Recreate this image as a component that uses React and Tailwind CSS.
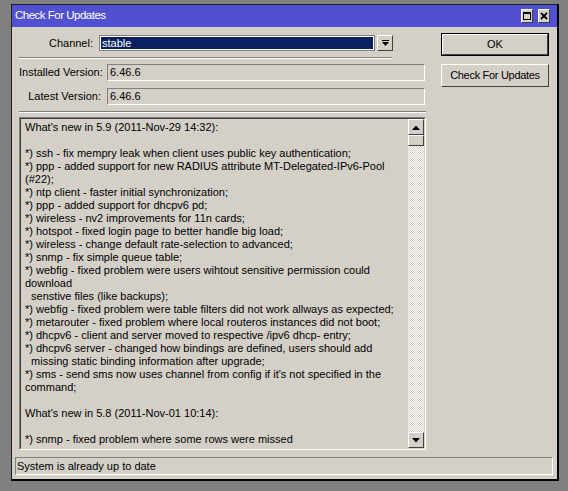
import React from "react";

const lines = [
  "What's new in 5.9 (2011-Nov-29 14:32):",
  "",
  "*) ssh - fix mempry leak when client uses public key authentication;",
  "*) ppp - added support for new RADIUS attribute MT-Delegated-IPv6-Pool",
  "(#22);",
  "*) ntp client - faster initial synchronization;",
  "*) ppp - added support for dhcpv6 pd;",
  "*) wireless - nv2 improvements for 11n cards;",
  "*) hotspot - fixed login page to better handle big load;",
  "*) wireless - change default rate-selection to advanced;",
  "*) snmp - fix simple queue table;",
  "*) webfig - fixed problem were users wihtout sensitive permission could",
  "download",
  "  senstive files (like backups);",
  "*) webfig - fixed problem were table filters did not work allways as expected;",
  "*) metarouter - fixed problem where local routeros instances did not boot;",
  "*) dhcpv6 - client and server moved to respective /ipv6 dhcp- entry;",
  "*) dhcpv6 server - changed how bindings are defined, users should add",
  "  missing static binding information after upgrade;",
  "*) sms - send sms now uses channel from config if it's not specified in the",
  "command;",
  "",
  "What's new in 5.8 (2011-Nov-01 10:14):",
  "",
  "*) snmp - fixed problem where some rows were missed",
];

const Raised = ({ className = "", children }) => (
  <div className={"border border-t-white border-l-white border-b-[#404040] border-r-[#404040] bg-[#d4d0c8] " + className}>
    {children}
  </div>
);

const Field = ({ label, value }) => (
  <div className="flex items-center h-[17px]">
    <div className="w-[88px] text-right pr-[6px] whitespace-nowrap">{label}</div>
    <div className="w-[318px] h-[17px] border border-t-[#808080] border-l-[#808080] border-b-white border-r-white flex items-center pl-[2px]">
      {value}
    </div>
  </div>
);

export default function App() {
  return (
    <div
      className="w-[568px] h-[491px] bg-[#808080] pt-[4px] pl-[11px] text-[11px] text-black"
      style={{ fontFamily: '"Liberation Sans", Arial, sans-serif' }}
    >
      <div className="w-[548px] h-[477px] border-l border-t border-[#202020] border-r-2 border-b-2 border-r-black border-b-black bg-[#d4d0c8] flex flex-col">
        {/* title bar */}
        <div className="h-[22px] bg-[#5050d0] flex items-center pl-[3px] pr-[7px]">
          <span className="text-white text-[11.5px] tracking-[-0.5px] flex-1">Check For Updates</span>
          <Raised className="w-[12px] h-[14px] flex items-center justify-center">
            <div className="w-[8px] h-[8px] border border-black border-t-2" />
          </Raised>
          <Raised className="w-[12px] h-[14px] ml-[5px] flex items-center justify-center">
            <svg width="8" height="8" viewBox="0 0 8 8">
              <path d="M1 1 L7 7 M7 1 L1 7" stroke="black" strokeWidth="1.8" />
            </svg>
          </Raised>
        </div>

        {/* body */}
        <div className="flex-1 flex flex-col pl-[7px] pr-[4px] pb-[4px]">
          <div className="flex">
            <div className="w-[407px] flex flex-col">
              <div className="mt-[8px] flex items-center h-[16px]">
                <div className="w-[80px] text-right pr-[6px]">Channel:</div>
                <div className="w-[276px] h-[16px] border border-[#808080] p-0">
                  <div className="w-full h-full border border-white bg-[#0a2060] text-white flex items-center pl-[1px] leading-none">
                    stable
                  </div>
                </div>
                <Raised className="ml-[2px] w-[16px] h-[16px] flex items-center justify-center">
                  <svg width="8" height="8" viewBox="0 0 8 8">
                    <rect x="1" y="1" width="7" height="1" fill="black" />
                    <path d="M1 3 H8 L4.5 7 Z" fill="black" />
                  </svg>
                </Raised>
              </div>
              <div className="mt-[6px] w-[373px] border-t border-t-[#808080] border-b border-b-white" />
              <div className="mt-[5px]">
                <Field label="Installed Version:" value="6.46.6" />
              </div>
              <div className="mt-[7px]">
                <Field label="Latest Version:" value="6.46.6" />
              </div>
              <div className="mt-[6px] w-[407px] border-t border-t-[#808080] border-b border-b-white" />
              <div className="mt-[4px] h-[333px] border border-t-[#808080] border-l-[#808080] border-b-white border-r-white">
                <div className="h-full border border-t-[#404040] border-l-[#404040] border-b-[#d4d0c8] border-r-[#d4d0c8] flex">
                  <div className="flex-1 pl-[4px] pt-[2px] leading-[13px] whitespace-pre overflow-hidden">
                    {lines.map((l, i) => (
                      <div key={i} className="h-[13px]">{l}</div>
                    ))}
                  </div>
                  <div className="w-[16px] flex flex-col">
                    <Raised className="h-[16px] flex items-center justify-center">
                      <svg width="8" height="5" viewBox="0 0 8 5">
                        <path d="M0 5 L4 0.5 L8 5 Z" fill="black" />
                      </svg>
                    </Raised>
                    <Raised className="h-[11px]" />
                    <div className="flex-1 bg-[repeating-conic-gradient(#ffffff_0_25%,#d4d0c8_0_50%)] bg-size-[2px_2px]" />
                    <Raised className="h-[16px] flex items-center justify-center">
                      <svg width="8" height="5" viewBox="0 0 8 5">
                        <path d="M0 0 L8 0 L4 4.5 Z" fill="black" />
                      </svg>
                    </Raised>
                  </div>
                </div>
              </div>
            </div>

            <div className="ml-[15px] flex flex-col">
              <div className="mt-[6px] w-[108px] h-[23px] border border-black">
                <Raised className="w-full h-full flex items-center justify-center">OK</Raised>
              </div>
              <Raised className="mt-[8px] w-[108px] h-[23px] flex items-center justify-center tracking-[-0.3px]">
                Check For Updates
              </Raised>
            </div>
          </div>

          <div className="mt-[7px] ml-[-4px] w-[538px] h-[18px] border border-t-[#808080] border-l-[#808080] border-b-white border-r-white flex items-center pl-[1px]">
            System is already up to date
          </div>
        </div>
      </div>
    </div>
  );
}
